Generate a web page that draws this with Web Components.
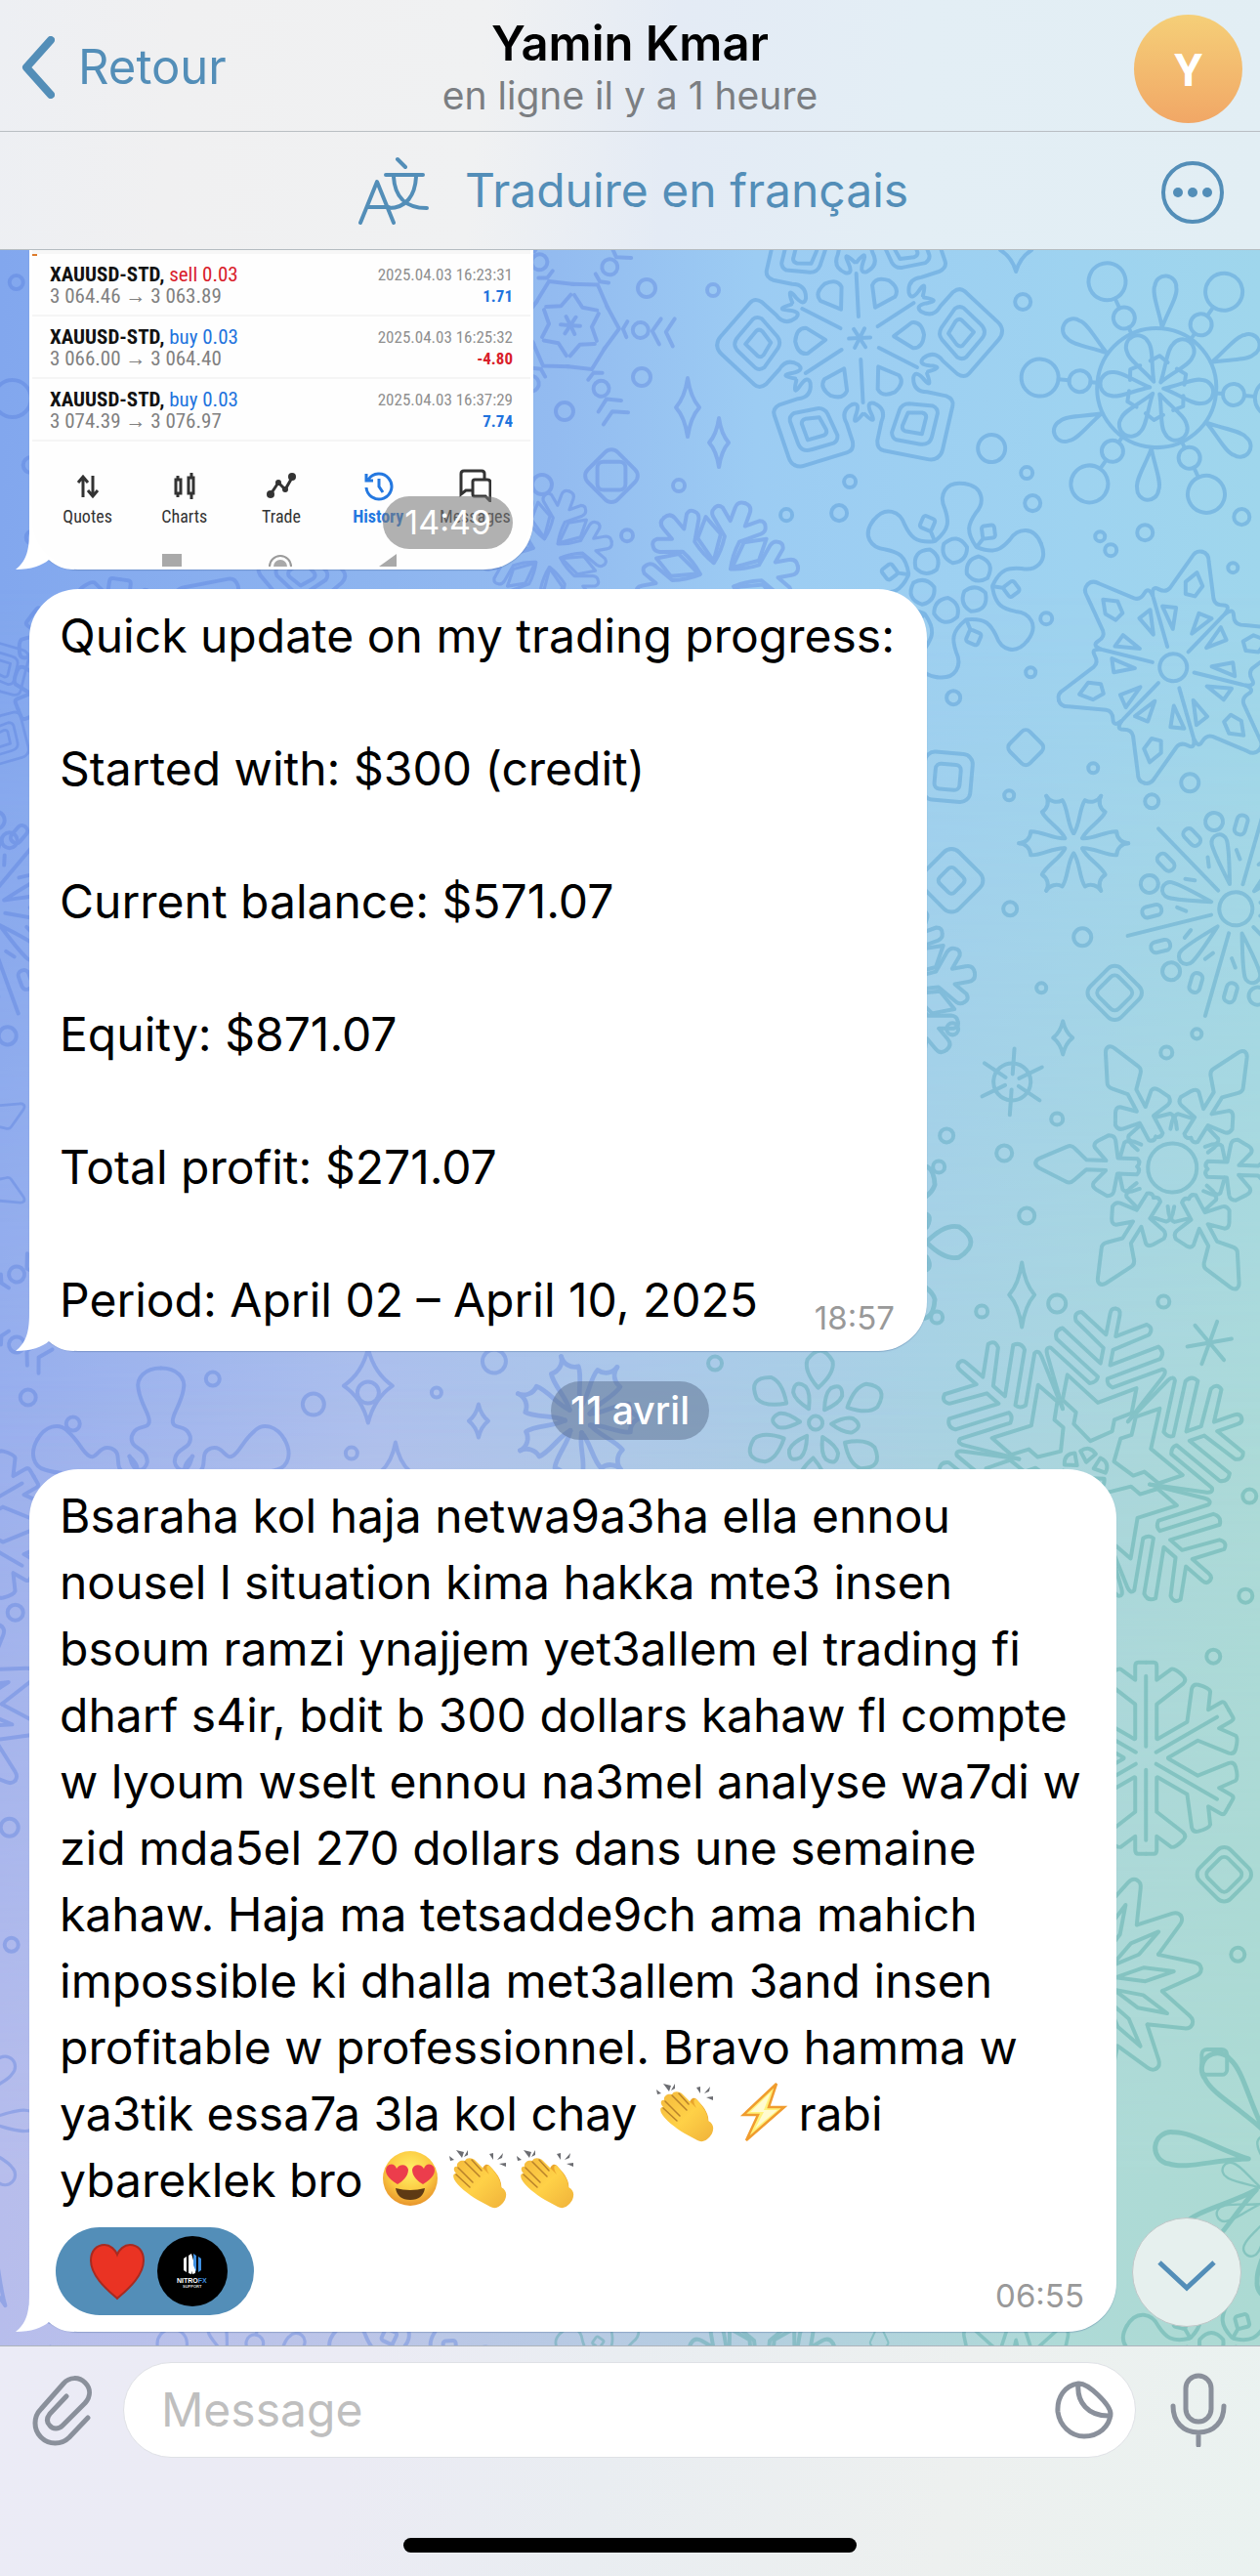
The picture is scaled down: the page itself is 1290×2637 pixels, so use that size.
<!DOCTYPE html>
<html lang="fr">
<head>
<meta charset="utf-8">
<meta name="viewport" content="width=device-width, initial-scale=1">
<title>Yamin Kmar</title>
<style>
  html, body { margin: 0; }
  body { font-family: Inter, "Liberation Sans", sans-serif; color: #000; background: #ebecf2; }
</style>
</head>
<body>
<chat-screen></chat-screen>

<script>
const define = (name, html, setup) => {
  const template = document.createElement('template');
  template.innerHTML = html;
  customElements.define(name, class extends HTMLElement {
    constructor() {
      super();
      this.attachShadow({ mode: 'open' }).append(template.content.cloneNode(true));
    }
    connectedCallback() { if (setup) setup(this, this.shadowRoot); }
  });
};

/* ---------- wallpaper ---------- */
const arms = (n, path) => Array.from({ length: n }, (_, k) => `<g transform="rotate(${k * 360 / n})">${path}</g>`).join('');
const both = d => `<path d="${d}"/><path d="${d}" transform="scale(-1 1)"/>`;
const turn = (a, s) => `<g transform="rotate(${a})">${s}</g>`;
const at = (x, y, a, s, k = 1) => `<g transform="translate(${x} ${y}) rotate(${a}) scale(${k})">${s}</g>`;
const ring = (x, y, r) => `<circle cx="${x}" cy="${y}" r="${r}"/>`;
const gem = (x, y, w, h) => `<path d="M${x} ${y - h}Q${x + w / 4} ${y - h / 3} ${x + w} ${y}Q${x + w / 4} ${y + h / 3} ${x} ${y + h}Q${x - w / 4} ${y + h / 3} ${x - w} ${y}Q${x - w / 4} ${y - h / 3} ${x} ${y - h}Z"/>`;
const tile = (x, y, r, a = 45) => `<rect x="${x - r * .72}" y="${y - r * .72}" width="${r * 1.44}" height="${r * 1.44}" rx="${r * .3}" transform="rotate(${a} ${x} ${y})"/>`;

const shapes = {
  kite: arms(6, both('M0-146Q5-146 9-142L42-110Q47-105 42-98L28-84Q16-76 24-64Q30-58 32-70Q34-86 38-68') +
    '<path d="M0-128Q4-128 8-124L25-108Q28-104 25-99L6-84Q0-80-6-84L-25-99Q-28-104-25-108L-8-124Q-4-128 0-128ZM0-117L13-105Q15-102 12-99L0-91L-12-99Q-15-102-13-105ZM0-35L13-54Q14-64 0-66Q-14-64-13-54ZM0 0V-11"/>' +
    turn(30, '<path d="M0-22V-66"/>')),
  wheel: ring(0, 0, 61) + arms(6, '<path d="M0-7C-5-24-14-38-12-46A12 12 0 0 1 12-46C14-38 5-24 0-7ZM0-61V-68M0-90V-101"/>' + ring(0, -79, 11) + ring(0, -120, 19) +
    turn(30, '<path d="M0-62C-4-78-14-96-11-104A11 11 0 0 1 11-104C14-96 4-78 0-62ZM-9-27L0-33L9-27"/>')),
  spark: arms(6, '<path d="M0-2V-10M-14-28L0-22L14-28M0-22M-22-36L0-50L22-36M-8-58L0-54L8-58M-13-92L0-84L13-92M-14-106L0-98L14-106"/>' + ring(0, -72, 8)),
  fir: arms(6, both('M0-84Q8-84 8-76L8-62L20-72Q26-74 28-68Q30-64 26-60L8-45Q6-30 9-16') + turn(30, '<path d="M0-20L12-46L0-66L-12-46Z"/>')),
  lobes: arms(6, both('M0-100C20-100 24-84 16-72C10-60 8-52 21-38') + '<path d="M0-18Q14-22 12-36Q0-50-12-36Q-14-22 0-18Z"/>' + turn(30, '<path d="M0-44V-54"/>' + tile(0, -63, 9))),
  star: ring(0, 0, 14) + arms(6, both('M0-122Q7-122 9-114L23-78Q26-72 34-74Q42-76 38-66') + '<path d="M0-100L9-88L4-76L-6-76L-9-88Z"/>' +
    turn(30, '<path d="M0-22V-74"/>') + both('M10-38L26-58L12-60Z')),
  bloom: arms(6, both('M0-56A12 12 0 0 0 12-44C13-34 4-20 5-9')),
  bloom7: arms(7, both('M0-56A12 12 0 0 0 12-44C13-34 4-20 5-10')),
  burst: ring(0, 0, 17) + arms(6, '<path d="M0-26Q-8-60-8-70A8 8 0 0 1 8-70Q8-60 0-26Z"/>' + ring(0, -92, 9) +
    turn(30, '<path d="M0-26V-114M10-50L16-58M-10-50L-16-58"/><rect x="13" y="-94" width="11" height="20" rx="5"/><rect x="-24" y="-94" width="11" height="20" rx="5"/>')),
  spear: ring(0, 0, 25) + arms(6, both('M0-140Q3-140 5-136L18-108Q20-104 16-100L5-88V-68L18-80Q22-82 25-77L31-66Q31-60 26-59L8-56V-36Q4-32 0-36M8-54L24-50Q28-46 22-42L17-36')),
  shroom: arms(6, both('M0-98H8Q11-98 11-94V-80L26-91Q30-92 38-84Q42-80 38-76L11-55V-20') + '<path d="M0-12V-84"/>'),
  rays: arms(12, both('M0-112Q5-112 7-106L18-72Q19-70 19-70') + '<path d="M0-24L7-54L0-84L-7-54Z"/>'),
  pine: arms(6, both('M0-170Q5-170 5-164V-142L34-160Q42-158 38-150L5-128V-112L50-140Q58-136 54-128L5-98Q5-92 12-90L58-118Q64-118 60-110L34-59') +
    '<path d="M0-72L36-94V-68L20-58V-46L0-32L-20-46V-58L-36-68V-94ZM-8-20Q0-28 8-20L0-10Z"/>'),
  leaves: ring(0, 0, 7) + arms(6, '<path d="M0-36Q-16-52-13-64Q0-84 13-64Q16-52 0-36Z"/>' + turn(30, '<path d="M0-16Q-9-30-7-38Q0-50 7-38Q9-30 0-16Z"/>')),
  drops: arms(8, '<path d="M0-34C-4-60-16-84-13-98A13 13 0 0 1 13-98C16-84 4-60 0-34Z"/>'),
  blob: arms(6, both('M0-146C16-146 26-136 23-124C20-108 12-100 12-92C12-82 26-90 30-76C32-62 14-66 14-50C16-40 28-36 32-56'))
};

const cool = [
  at(584, 333, 94, shapes.spark), at(734, 594, -40, shapes.fir), at(560, 566, 20, shapes.fir, .8),
  at(165, 1546, 0, shapes.blob), at(592, 1453, -15, shapes.bloom7, 1.2), tile(626, 487, 30), tile(626, 487, 20, 0),
  at(300, 690, 5, shapes.kite), at(110, 690, 8, shapes.shroom), at(-20, 930, 10, shapes.burst), at(-60, 720, 0, shapes.kite, .7),
  at(-45, 1340, 0, shapes.spark), at(-60, 1180, 0, shapes.spear, .7), at(-70, 1750, 10, shapes.rays), at(-50, 2170, 0, shapes.drops, .8),
  at(20, 2390, 20, shapes.drops), at(250, 2460, 10, shapes.wheel, .8), at(420, 2450, 10, shapes.lobes), at(-50, 1560, 0, shapes.shroom),
  gem(704, 417, 12, 30), gem(736, 453, 10, 25), gem(490, 1454, 10, 17), gem(377, 1418, 25, 38), ring(377, 1425, 11), gem(405, 1506, 15, 30),
  ...[[17,289,7],[13,408,19],[32,476,8],[34,550,7],[662,295,9],[730,297,6],[657,386,9],[578,421,9],[695,497,6],[642,548,6],[555,496,10],[29,1430,8],[75,1457,7],[218,1411,7],[321,1437,11],[360,1487,6],[447,1425,5],[506,1393,12],[10,860,8],[8,1060,9],[16,1650,8],[10,1870,9],[12,1990,7]].map(c => ring(...c))
].join('');

const fresh = [
  at(880, 346, 87, shapes.kite), at(1184, 397, -85, shapes.wheel), at(973, 594, 8, shapes.lobes), at(1201, 683, 14, shapes.star),
  at(1099, 863, 30, shapes.bloom), at(1265, 930, -14, shapes.burst), at(1200, 1195, -88, shapes.spear), at(1110, 1506, 11, shapes.pine),
  at(1173, 1799, 0, shapes.shroom), at(1118, 2026, -6, shapes.rays), at(1320, 2215, 8, shapes.drops, 1.25), at(1310, 2250, 30, shapes.drops, .6),
  at(1240, 2430, 0, shapes.lobes), at(835, 1456, 4, shapes.leaves), at(915, 1010, 80, shapes.fir), at(905, 1271, 90, shapes.leaves, 1.2),
  at(1036, 1107, 4, ring(0, 0, 19) + arms(6, '<path d="M0-8V-34"/>')), at(1238, 1374, 20, arms(6, '<path d="M0 0V-23"/>')),
  at(1040, 256, 0, gem(0, 0, 16, 22)), at(780, 2440, 0, shapes.fir), at(620, 2440, 20, shapes.lobes, .7), at(900, 2450, 0, shapes.spear, .5), at(1040, 2470, 0, shapes.rays, .9),
  gem(1088, 1062, 10, 17), gem(1046, 1325, 13, 33), tile(1050, 765, 20), tile(1141, 1016, 31), tile(1141, 1016, 20), tile(1253, 1918, 31),
  tile(1253, 1918, 20), tile(974, 901, 36), tile(974, 901, 15), tile(970, 795, 34, 5), tile(970, 795, 18, 5), tile(1243, 2110, 18, 0),
  ...[[1047,309,8],[805,527,6],[859,525,8],[870,493,6],[1015,459,14],[1051,484,6],[1057,515,8],[1126,549,5],[1137,563,6],[1172,545,8],[1271,529,8],[1262,581,5],[1071,633,6],[1055,688,5],[976,714,7],[1119,786,5],[1033,814,5],[1179,820,7],[1218,801,9],[1034,930,7],[1108,959,9],[1066,1011,5],[975,1053,6],[969,1162,7],[961,1194,6],[1028,1180,8],[1082,1145,6],[1194,1077,6],[1225,1058,5],[1051,1244,8],[1005,1342,6],[1082,1334,9],[1191,1332,6],[959,1348,6],[732,1395,7],[1279,1531,7],[1275,1633,7],[1242,1695,7],[1267,2000,7]].map(c => ring(...c))
].join('');

define('chat-wallpaper', `
<style>
  :host { display: block; position: absolute; inset: 0; overflow: hidden; z-index: 0;
    background: linear-gradient(90deg, #82a7ee 0%, #93bbf0 44%, #9cccf3 60%, #9ed3f0 86%, #9fd6ec 100%); }
  .mid, .low { position: absolute; inset: 0; }
  .mid { background: linear-gradient(90deg, #99afed 0%, #afc0ec 30%, #adc8e8 50%, #a9d2e2 74%, #acdad8 100%);
    -webkit-mask-image: linear-gradient(180deg, transparent 16%, #000 58%); mask-image: linear-gradient(180deg, transparent 16%, #000 58%); }
  .low { background: linear-gradient(90deg, #b7bdec 0%, #bcc5e8 28%, #b5cde1 56%, #aedad7 84%, #acdad3 100%);
    -webkit-mask-image: linear-gradient(180deg, transparent 54%, #000 92%); mask-image: linear-gradient(180deg, transparent 54%, #000 92%); }
  svg { position: absolute; inset: 0; width: 100%; height: 100%; fill: none; stroke-width: 4; stroke-linejoin: round; stroke-linecap: round; }
  .cool { stroke: #5078dc; opacity: .34; }
  .fresh { stroke: #3c88d0; opacity: .34;
    -webkit-mask-image: linear-gradient(180deg, #000 20%, transparent 60%); mask-image: linear-gradient(180deg, #000 20%, transparent 60%); }
  .teal { stroke: #2a9490; opacity: .3;
    -webkit-mask-image: linear-gradient(180deg, transparent 20%, #000 60%); mask-image: linear-gradient(180deg, transparent 20%, #000 60%); }
</style>
<div class="mid"></div><div class="low"></div>
<svg class="cool" viewBox="0 256 1290 2144" preserveAspectRatio="xMidYMin slice" aria-hidden="true">${cool}</svg>
<svg class="fresh" viewBox="0 256 1290 2144" preserveAspectRatio="xMidYMin slice" aria-hidden="true">${fresh}</svg>
<svg class="teal" viewBox="0 256 1290 2144" preserveAspectRatio="xMidYMin slice" aria-hidden="true">${fresh}</svg>`);

/* ---------- emoji ---------- */
const emoji = {
  clap: ['👏', `<g fill="#6c6d72"><path d="M8 2L14 10L16 4ZM1 8L6 12L2 13ZM20 2L16 9L20 7ZM42 6L46 12L46 5ZM56 5L50 12L55 10ZM52 16L59 15V19Z"/></g>
    <path d="M34 24C36 16 40 15 43 19C50 26 56 34 54 44L44 52Z" fill="#e9a52c"/>
    <path d="M9 19C8 15 12 12 17 13C19 9 25 10 28 13L42 27C37 19 40 16 43 19C49 26 54 33 54 40C60 43 60 48 58 53C54 60 48 63 43 60L30 53C20 47 10 39 6 32C4 27 6 26 8 26C4 22 6 18 9 19Z" fill="url(#g)"/>
    <path d="M10 20L25 35M17 14L32 29M8 27L22 40M24 12L34 23" fill="none" stroke="#b9822a" stroke-width="1.5" stroke-linecap="round"/>
    <defs><linearGradient id="g" x1="0" y1="0" x2="1" y2="1"><stop offset="0" stop-color="#f4b93c"/><stop offset=".5" stop-color="#ffd147"/><stop offset="1" stop-color="#f0b23a"/></linearGradient></defs>`],
  bolt: ['⚡️', `<path d="M42 2L8 34H23L11 60L50 26H34Z" fill="#fff27a" stroke="#f09c2e" stroke-width="2.5" stroke-linejoin="miter"/><path d="M36 11L15 31H29L20 48L43 29H29Z" fill="#fffbd0"/>`],
  love: ['😍', `<circle cx="30" cy="31" r="28" fill="url(#f)"/>
    <path d="M17 37C7 31 3 25 6 19C10 14 15 17 16 21C20 15 27 17 28 22C28 29 22 34 17 37Z" fill="#ec3d4c"/>
    <path d="M43 37C53 31 57 25 54 19C50 14 45 17 44 21C40 15 33 17 32 22C32 29 38 34 43 37Z" fill="#ec3d4c"/>
    <path d="M15 41Q30 45 45 41Q43 53 30 53Q17 53 15 41Z" fill="#5e3a14"/>
    <defs><radialGradient id="f" cx=".5" cy=".35" r=".65"><stop offset="0" stop-color="#fff16a"/><stop offset=".6" stop-color="#fccb42"/><stop offset="1" stop-color="#e8952c"/></radialGradient></defs>`],
  heart: ['❤️', `<path d="M30 59C20 50 3 36 3 20C3 10 9 4 17 4C23 4 28 9 30 14C32 9 37 4 43 4C51 4 57 10 57 20C57 36 40 50 30 59Z" fill="#ea3323" stroke="#a92a20" stroke-width="2"/>`]
};
define('emoji-glyph', `<style>
  :host { display: inline-block; width: 69px; height: 62px; vertical-align: -12px; line-height: 0; text-align: center; }
  svg { width: 60px; height: 62px; }
</style>`, (el, root) => {
  const [label, art] = emoji[el.getAttribute('name')];
  root.innerHTML += `<svg viewBox="0 0 60 62" role="img" aria-label="${label}">${art}</svg>`;
});

/* ---------- header ---------- */
define('chat-header', `<style>
  :host { display: grid; grid-template-columns: 1fr auto 1fr; align-items: center; height: 134px; padding: 0 18px;
    border-bottom: 1px solid #b9bec3; }
  a { display: flex; align-items: center; gap: 24px; color: #538eb8; font-size: 49px; line-height: 64px; text-decoration: none; padding-top: 4px; }
  .who { text-align: center; padding-top: 4px; }
  h1 { margin: 0; font-size: 49px; line-height: 58px; font-weight: 600; }
  p { margin: 0; font-size: 39px; line-height: 48px; color: #7b7e82; }
  button { justify-self: end; width: 111px; height: 111px; padding: 0; border: 0; border-radius: 50%; margin-top: 6px;
    background: linear-gradient(#f5cf78, #f1a766); color: #fff; font: 700 46px "Open Sans", sans-serif; }
</style>
<a href="#chats"><svg width="38" height="64" viewBox="0 0 38 64" fill="none" stroke="#538eb8" stroke-width="8" stroke-linecap="round" stroke-linejoin="round" aria-hidden="true"><path d="M34 4L9 32L34 60"/></svg><slot name="back"></slot></a>
<div class="who"><h1><slot name="name"></slot></h1><p><slot name="status"></slot></p></div>
<button type="button" aria-label="Profil"><slot name="initial"></slot></button>`);

define('translate-bar', `<style>
  :host { display: grid; grid-template-columns: 1fr auto 1fr; align-items: center; height: 120px; padding: 0 36px; border-bottom: 1px solid #b5bcc1; }
  button { border: 0; background: none; padding: 0; font: inherit; color: #538eb8; }
  .go { grid-column: 2; display: flex; align-items: center; gap: 36px; font-size: 48px; line-height: 64px; padding-left: 6px; }
  .more { justify-self: end; height: 66px; margin-top: 4px; }
  svg { display: block; fill: none; stroke: #538eb8; stroke-linecap: round; stroke-linejoin: round; }
</style>
<button class="go" type="button"><svg width="74" height="70" viewBox="0 0 74 70" stroke-width="4" aria-hidden="true"><path d="M3 68L20 26L37 68M10 52H32M41 3L49 11M29 19H67M37 21C38 40 48 53 71 53M60 21C59 40 50 53 32 53"/></svg><slot></slot></button>
<button class="more" type="button" aria-label="Options"><svg width="66" height="66" viewBox="0 0 66 66" stroke-width="4" aria-hidden="true"><circle cx="33" cy="33" r="30"/><g fill="#538eb8" stroke="none"><circle cx="18" cy="33" r="5"/><circle cx="33" cy="33" r="5"/><circle cx="48" cy="33" r="5"/></g></svg></button>`);

/* ---------- messages ---------- */
define('chat-bubble', `<style>
  :host { display: block; position: relative; align-self: flex-start; box-sizing: border-box; max-width: 1113px; background: #fff; border-radius: 50px;
    box-shadow: 0 1px 1px rgba(70, 100, 150, .35); padding: 14px 33px 18px 31px; font-size: 48px; line-height: 68px; }
  :host([cut]) { border-radius: 0 0 50px 50px; padding: 0 3px 3px; }
  .tail { position: absolute; left: -14px; bottom: 0; width: 60px; height: 60px; fill: #fff; }
  .body { position: relative; }
</style>
<svg class="tail" viewBox="0 0 60 60" aria-hidden="true"><path d="M14 0V22C14 42 10 52 0 60C16 60 27 56 34 50C42 57 50 60 60 60V0Z"/></svg>
<div class="body"><slot></slot></div>`);

define('message-time', `<style>
  :host { display: block; flex: none; margin-left: auto; font-size: 33px; line-height: 40px; color: #999; }
</style><slot></slot>`);

define('date-pill', `<style>
  :host { display: block; align-self: center; margin: 31px 0 30px; padding: 0 20px; border-radius: 30px; background: rgba(90, 110, 140, .5);
    color: #fff; font-size: 39px; line-height: 60px; font-weight: 500; }
</style><slot></slot>`);

define('trade-row', `<style>
  :host { display: flex; justify-content: space-between; box-sizing: border-box; height: 64px; padding: 10px 18px 0; border-bottom: 2px solid #f5f5f5;
    font-family: "Roboto Condensed", "Liberation Sans Narrow", Roboto, sans-serif; font-size: 21px; line-height: 22px; color: #808080; }
  b { color: #111; } i { font-style: normal; }
  .r { text-align: right; font-size: 17px; color: #8f8f8f; }
  .r b, .buy { color: #1f73dd; }
  .sell, .r b.loss { color: #d9202a; }
</style>
<div><div><b></b> <i></i></div><div class="px"></div></div>
<div class="r"><div class="when"></div><b class="pl"></b></div>`, (el, root) => {
  const d = el.dataset;
  root.querySelector('b').textContent = 'XAUUSD-STD,';
  const side = root.querySelector('i');
  side.textContent = `${d.side} 0.03`;
  side.className = d.side;
  root.querySelector('.px').textContent = `${d.from} → ${d.to}`;
  root.querySelector('.when').textContent = d.when;
  const pl = root.querySelector('.pl');
  pl.textContent = d.pl;
  if (d.pl.startsWith('-')) pl.classList.add('loss');
});

define('trade-photo', `<style>
  :host { display: block; position: relative; width: 510px; background: #fefefe; overflow: hidden; border-radius: 0 0 47px 47px;
    border-top: 4px solid #f7f7f7; }
  nav { display: grid; grid-template-columns: repeat(5, 1fr); padding: 28px 7px 0; height: 88px; box-sizing: border-box;
    font-family: "Roboto Condensed", "Liberation Sans Narrow", Roboto, sans-serif; font-size: 18px; line-height: 20px; color: #333; }
  nav a { display: flex; flex-direction: column; align-items: center; gap: 5px; color: inherit; text-decoration: none; }
  nav a.on { color: #2478e0; font-weight: 700; }
  nav svg { width: 34px; height: 34px; fill: none; stroke: currentColor; stroke-width: 3; }
  .sys { display: flex; justify-content: space-between; height: 13px; padding: 0 137px 0 133px; margin-top: 27px; }
  .sys svg { display: block; }
  .mark { position: absolute; left: 0; top: -4px; width: 5px; height: 6px; background: #dd7c2c; }
  time { position: absolute; right: 18px; bottom: 18px; padding: 0 22px; border-radius: 27px; background: rgba(120, 120, 120, .58); color: #fff; font-size: 34px; line-height: 54px; }
</style>
<slot></slot>
<nav>
  <a href="#quotes"><svg viewBox="0 0 34 34"><path d="M12 29V9M7 14L12 8L17 14M22 7V27M17 22L22 28L27 22"/></svg>Quotes</a>
  <a href="#charts"><svg viewBox="0 0 34 34"><path d="M8 11H13V25H8ZM10 7V11M10 25V29M21 9H26V25H21ZM24 4V9M24 25V31"/></svg>Charts</a>
  <a href="#trade"><svg viewBox="0 0 34 34"><path d="M6 26L14 14L21 21L28 9"/><g fill="currentColor" stroke="none"><circle cx="6" cy="26" r="4"/><circle cx="28" cy="8" r="4"/><circle cx="14" cy="14" r="3"/><circle cx="21" cy="21" r="3"/></g></svg>Trade</a>
  <a href="#history" class="on"><svg viewBox="0 0 34 34"><path d="M7 11A13 13 0 1 1 5 19M5 5V12H12M18 10V18L22 24"/></svg>History</a>
  <a href="#messages"><svg viewBox="0 0 34 34"><path d="M14 22H8L3 26V5Q3 2 6 2H24Q27 2 27 5V10M17 11H30Q33 11 33 14V33L28 28H17Q15 28 15 26V13Q15 11 17 11Z"/></svg>Messages</a>
</nav>
<div class="sys">
  <svg width="20" height="13"><path d="M0 0H20V13H0Z" fill="#a9a9a9"/></svg>
  <svg width="26" height="13" viewBox="0 0 26 13"><circle cx="13" cy="13" r="11" fill="none" stroke="#9a9a9a" stroke-width="2"/><circle cx="13" cy="13" r="7" fill="#a9a9a9"/></svg>
  <svg width="18" height="13"><path d="M0 13L18 0V13Z" fill="#a9a9a9"/></svg>
</div>
<span class="mark"></span>
<time>14:49</time>`);

define('reaction-pill', `<style>
  button { display: flex; align-items: center; gap: 7px; box-sizing: border-box; height: 90px; padding: 0 27px 0 28px; border: 0; border-radius: 45px; background: #538eb8; }
  :host { display: block; margin-left: -4px; }
  .logo { width: 72px; height: 72px; border-radius: 50%; background: #000; }
</style>
<button type="button" aria-label="Réaction"><emoji-glyph name="heart"></emoji-glyph>
<svg class="logo" viewBox="0 0 72 72" aria-hidden="true">
  <path d="M27 23L30 21V37L27 35ZM32 20L35 18V39L32 38ZM35 18L39 32V38L36 39L32 25Z" fill="#fff"/><path d="M37 18L40 20V37L37 30ZM42 21L45 23V35L42 37Z" fill="#3f8fe0"/>
  <text x="20" y="48" font-family="Liberation Sans, sans-serif" font-weight="700" font-size="7" fill="#fff">NITRO<tspan fill="#3f8fe0">FX</tspan></text>
  <text x="26" y="53" font-family="Liberation Sans, sans-serif" font-weight="700" font-size="4" fill="#ddd">SUPPORT</text>
</svg></button>`);

define('scroll-down', `<style>
  :host { display: block; position: absolute; right: 19px; bottom: 19px; z-index: 2; }
  button { display: grid; place-items: center; box-sizing: border-box; width: 112px; height: 112px; padding: 8px 0 0; border: 1px solid #bfc7c8; border-radius: 50%; background: #e6f0ee; }
</style>
<button type="button" aria-label="Descendre"><svg width="60" height="34" viewBox="0 0 60 34" fill="none" stroke="#538eb8" stroke-width="5"><path d="M2 3L30 29L58 3"/></svg></button>`);

/* ---------- composer ---------- */
define('message-composer', `<style>
  :host { display: block; border-top: 1px solid #adb3bb; height: 236px; box-sizing: border-box;
    background: linear-gradient(100deg, #ebebf6 0%, #ebebf4 28%, #e9edf1 48%, #edf0ef 75%, #eaf2f0 100%); }
  form { display: flex; align-items: center; padding: 16px 34px 0 32px; }
  .ic { display: block; border: 0; padding: 0; background: none; flex: none; }
  svg { display: block; fill: none; stroke: #8a909b; stroke-width: 5; stroke-linecap: round; stroke-linejoin: round; }
  label { flex: 1; display: flex; align-items: center; box-sizing: border-box; height: 98px; margin: 0 35px 0 32px; padding: 0 22px 0 38px; border: 1px solid #dfe1e6; border-radius: 49px; background: #fff; }
  input { flex: 1; min-width: 0; border: 0; outline: 0; padding: 0; background: none; font: inherit; font-size: 48px; line-height: 64px; color: #000; }
  input::placeholder { color: #bfbfbf; opacity: 1; }
  .home { width: 36%; height: 15px; border-radius: 8px; background: #000; margin: 82px auto 0; }
</style>
<form>
  <button class="ic" type="button" aria-label="Joindre"><svg width="62" height="74" viewBox="0 0 62 74"><path d="M58 45L39 65C31 73 18 73 10 65C2 57 2 44 10 36L33 10C39 3 49 3 55 9C61 15 61 23 55 30L32 53C28 57 22 57 19 53C15 49 16 45 19 41L36 23"/></svg></button>
  <label><input type="text" placeholder="Message" aria-label="Message"><button class="ic" type="button" aria-label="Autocollants"><svg width="60" height="60" viewBox="0 0 60 60"><path d="M24 3C10 5 2 17 3 32C5 46 16 57 30 57C45 57 56 47 57 34C57 25 34 2 24 3ZM24 3C22 22 34 37 57 36"/></svg></button></label>
  <button class="ic" type="button" aria-label="Micro"><svg width="58" height="76" viewBox="0 0 58 76"><rect x="16" y="3" width="26" height="47" rx="13"/><path d="M3 34C3 50 13 61 29 61C45 61 55 50 55 34M29 61V74"/></svg></button>
</form>
<div class="home"></div>`);

/* ---------- screen ---------- */
define('chat-screen', `<style>
  :host { display: flex; flex-direction: column; min-height: 100vh; }
  .top { background: linear-gradient(95deg, #edeff3 0%, #f0f0f1 14%, #f0f1f2 38%, #e4ebf5 53%, #e3eef5 72%, #e2eef4 100%); }
  main { position: relative; flex: 1; display: flex; flex-direction: column; padding: 0 30px 13px; overflow: hidden; }
  chat-bubble, date-pill { z-index: 1; }
  chat-bubble + chat-bubble { margin-top: 20px; }
  p { margin: 0; }
  .stack { display: flex; flex-direction: column; gap: 68px; }
  .row { display: flex; align-items: flex-end; }
  .inline { margin-bottom: -4px; padding-top: 4px; }
  .inline p { padding-bottom: 4px; margin-top: -4px; }
  .reacts { margin: 14px 0 -1px; }
</style>
<div class="top">
  <chat-header><span slot="back">Retour</span><span slot="name">Yamin Kmar</span><span slot="status">en ligne il y a 1 heure</span><span slot="initial">Y</span></chat-header>
  <translate-bar>Traduire en français</translate-bar>
</div>
<main>
  <chat-wallpaper></chat-wallpaper>
  <chat-bubble cut>
    <trade-photo>
      <trade-row data-side="sell" data-from="3 064.46" data-to="3 063.89" data-when="2025.04.03 16:23:31" data-pl="1.71"></trade-row>
      <trade-row data-side="buy" data-from="3 066.00" data-to="3 064.40" data-when="2025.04.03 16:25:32" data-pl="-4.80"></trade-row>
      <trade-row data-side="buy" data-from="3 074.39" data-to="3 076.97" data-when="2025.04.03 16:37:29" data-pl="7.74"></trade-row>
    </trade-photo>
  </chat-bubble>
  <chat-bubble>
    <div class="stack">
      <p>Quick update on my trading progress:</p>
      <p>Started with: $300 (credit)</p>
      <p>Current balance: $571.07</p>
      <p>Equity: $871.07</p>
      <p>Total profit: $271.07</p>
      <div class="row inline"><p>Period: April 02 – April 10, 2025</p><message-time>18:57</message-time></div>
    </div>
  </chat-bubble>
  <date-pill>11 avril</date-pill>
  <chat-bubble>
    <p>Bsaraha kol haja netwa9a3ha ella ennou nousel l situation kima hakka mte3 insen bsoum ramzi ynajjem yet3allem el trading fi dharf s4ir, bdit b 300 dollars kahaw fl compte w lyoum wselt ennou na3mel analyse wa7di w zid mda5el 270 dollars dans une semaine kahaw. Haja ma tetsadde9ch ama mahich impossible ki dhalla met3allem 3and insen profitable w professionnel. Bravo hamma w ya3tik essa7a 3la kol chay <emoji-glyph name="clap"></emoji-glyph> <emoji-glyph name="bolt"></emoji-glyph>rabi ybareklek bro <emoji-glyph name="love"></emoji-glyph><emoji-glyph name="clap"></emoji-glyph><emoji-glyph name="clap"></emoji-glyph></p>
    <div class="row reacts"><reaction-pill></reaction-pill><message-time>06:55</message-time></div>
  </chat-bubble>
  <scroll-down></scroll-down>
</main>
<message-composer></message-composer>`);
</script>
</body>
</html>
